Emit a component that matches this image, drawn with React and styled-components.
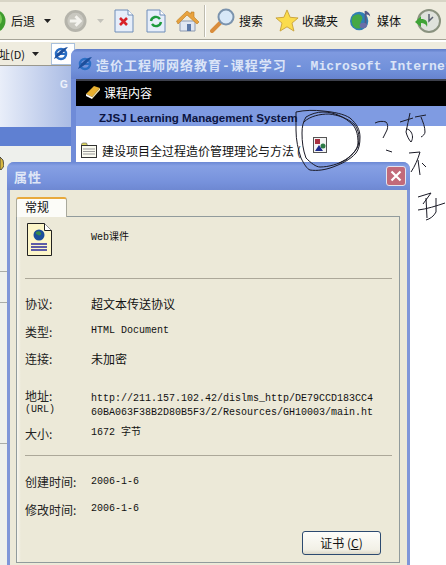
import React from "react";
import styled, { createGlobalStyle } from "styled-components";

const GlobalStyle = createGlobalStyle`
	html, body {
		margin: 0;
		padding: 0;
		background: #fff;
	}
	body {
		width: 446px;
		height: 565px;
		overflow: hidden;
		font-family: "Noto Sans CJK SC", "Liberation Sans", sans-serif;
		font-size: 12px;
		color: #111;
	}
`;

const MONO = `"Liberation Mono", "Noto Sans CJK SC", monospace`;

function BackIcon() {
	return (
		<svg width="24" height="24" viewBox="0 0 24 24">
			<circle cx="12" cy="12" r="11.5" fill="#3f9c2e" />
			<circle cx="12" cy="10" r="8" fill="#7ccb58" />
			<path d="M17 12H7M11 7l-5 5 5 5" fill="none" stroke="#fff" strokeWidth="3" />
		</svg>
	);
}

function ForwardIcon() {
	return (
		<svg width="23" height="24" viewBox="0 0 24 24">
			<circle cx="12" cy="12" r="11.500" fill="#b5b4ab" />
			<circle cx="12" cy="12" r="8.500" fill="#c9c8c0" />
			<path d="M6 12h10M12 7l5 5-5 5" fill="none" stroke="#f4f3ee" strokeWidth="3" />
		</svg>
	);
}

function PageIcon({ children }) {
	return (
		<svg width="20" height="24" viewBox="0 0 20 24">
			<path d="M1 1h13l5 5v17H1z" fill="#e6eefa" stroke="#6f8db8" />
			<path d="M14 1v5h5" fill="#fff" stroke="#6f8db8" />
			{children}
		</svg>
	);
}

function HomeIcon() {
	return (
		<svg width="24" height="24" viewBox="0 0 24 24">
			<path d="M4 12v10h15V12z" fill="#dfe6f2" stroke="#8d9ab0" />
			<path d="M0.5 12L11 2l4 3V3h3v5l5 5-2 2-10-9-9 9z" fill="#e8a23e" stroke="#b97a20" strokeWidth=".6" />
			<rect x="11" y="15" width="4" height="7" fill="#5b78a8" />
		</svg>
	);
}

function SearchIcon() {
	return (
		<svg width="26" height="26" viewBox="0 0 26 26">
			<path d="M11 14L2 23" stroke="#d98d3c" strokeWidth="4" strokeLinecap="round" />
			<circle cx="16" cy="9" r="7.500" fill="#d8e8f8" stroke="#7b93ad" strokeWidth="2" />
		</svg>
	);
}

function StarIcon() {
	return (
		<svg width="24" height="24" viewBox="0 0 26 26">
			<path
				d="M13 1l3.400 8 8.600.7-6.600 5.600 2.100 8.600L13 19.300 5.500 23.900l2.100-8.600L1 9.700 9.600 9z"
				fill="#fbdc4c"
				stroke="#c9a23a"
			/>
		</svg>
	);
}

function MediaIcon() {
	return (
		<svg width="22" height="24" viewBox="0 0 24 26">
			<circle cx="10" cy="13" r="10" fill="#2f7fb5" />
			<path d="M3 8c4-3 8-3 10 0s-3 6-1 10-4 4-7 2-4-9-2-12z" fill="#45a845" />
			<path d="M17 2v15" stroke="#555a88" strokeWidth="2" />
			<path d="M17 2c3 1 5 3 5 6-2-2-3-2-5-2z" fill="#555a88" />
			<ellipse cx="14.500" cy="18" rx="4" ry="3" fill="#6a6ea8" />
		</svg>
	);
}

function HistoryIcon() {
	return (
		<svg width="28" height="26" viewBox="0 0 28 26">
			<circle cx="15" cy="13" r="11" fill="#dfe2dc" stroke="#8a927f" strokeWidth="2" />
			<path d="M15 6v7l4-4" fill="none" stroke="#5a6070" strokeWidth="1.500" />
			<path d="M1 14l6-6v3c5 0 7 2 6 8-1-3-3-4-6-4v4z" fill="#3fa336" />
		</svg>
	);
}

function IeIcon({ size = 16 }) {
	return (
		<svg width={size} height={size} viewBox="0 0 16 16">
			<circle cx="8" cy="8" r="5" fill="none" stroke="#2c6fc4" strokeWidth="2.500" />
			<path d="M3.500 8h9" stroke="#2c6fc4" strokeWidth="2" />
			<path d="M1 13c2-5 8-11 14-12-3 4-9 10-14 12z" fill="#1d4f9c" />
		</svg>
	);
}

function WebDocIcon() {
	return (
		<svg width="25" height="33" viewBox="0 0 25 33">
			<path d="M.5.500h17l7 7v25H.5z" fill="#fdf6c8" stroke="#222" />
			<path d="M17.500.500v7h7" fill="#fff" stroke="#222" />
			<circle cx="12" cy="12" r="5.500" fill="#1c4f9a" />
			<path d="M9 9c2-1 4-1 5 1s-2 3-3 2-3-1-2-3z" fill="#3a8a4a" />
			<path d="M4 21h16M4 24h16M4 27h16" stroke="#2a2a9c" strokeWidth="1.500" />
		</svg>
	);
}

function FolderDocIcon() {
	return (
		<svg width="16" height="16" viewBox="0 0 16 16">
			<path d="M.5 3.500V2l1-1h4l1 2.500z" fill="#e0d860" stroke="#555" strokeWidth=".6" />
			<rect x=".5" y="3.500" width="15" height="12" fill="#fbfbf0" stroke="#333" />
			<path d="M2 7h12M2 9.500h12M2 12h12" stroke="#999" />
		</svg>
	);
}

function BookIcon() {
	return (
		<svg width="16" height="14" viewBox="0 0 16 14">
			<path d="M1 9L9 1l6 2-8 9z" fill="#e8b030" />
			<path d="M1 9l6 3v2L1 11z" fill="#fff" />
			<path d="M7 12l8-9v2l-8 9z" fill="#f5e6b0" />
		</svg>
	);
}

function BrokenImage() {
	return (
		<svg width="14" height="16" viewBox="0 0 14 16">
			<rect x=".5" y=".5" width="13" height="15" fill="#f4f4f4" stroke="#555" />
			<rect x="2" y="2" width="5" height="5" fill="#a83040" />
			<circle cx="10" cy="9" r="2.500" fill="#2d7a45" />
			<path d="M2 14l4-6 4 6z" fill="#1c2a8c" />
		</svg>
	);
}

function TrayIcon() {
	return (
		<svg width="4" height="13" viewBox="0 0 4 13">
			<path d="M0 0l3 3 1 6-3 4H0z" fill="#d8b840" stroke="#333" strokeWidth=".8" />
		</svg>
	);
}

function CloseGlyph() {
	return (
		<svg width="12" height="12" viewBox="0 0 12 12">
			<path d="M1.500 1.500l9 9M10.500 1.500l-9 9" stroke="#fff" strokeWidth="2.200" />
		</svg>
	);
}

function Arrow() {
	return (
		<svg width="7" height="4" viewBox="0 0 7 4">
			<path d="M0 0h7L3.500 4z" fill="#222" />
		</svg>
	);
}

function GreyArrow() {
	return (
		<svg width="7" height="4" viewBox="0 0 7 4">
			<path d="M0 0h7L3.500 4z" fill="#c4c3bb" />
		</svg>
	);
}

// pen marks drawn over the screenshot
function InkMarks() {
	return (
		<Ink width="446" height="565" viewBox="0 0 446 565">
			<g fill="none" stroke="#1a1a26" strokeWidth="1">
				<path d="M296 112c9-2 19-2 27-1 11 1 21 3 27 7 7 6 10 12 10 19 0 7-1 12-4 16-6 7-15 11-23 14-8 3-16 4-23 3-3-1-6-6-9-12-3-9-5-18-5-28 0-6 0-13 0-18z" />
				<path d="M306 117c5-3 11-5 17-5 11 0 22 5 30 13 4 5 5 11 5 18 0 6-6 12-12 17-8 4-17 7-26 7-4 0-9-4-14-9-3-8-4-16-4-25 0-6 1-11 4-16z" />
				<path d="M304 122c6-6 16-8 25-8 9 1 18 4 25 10 5 6 6 14 4 22-3 7-10 13-19 17" />
				<path d="M375 123c4-2 8-2 11-1 2 2 2 5 1 8-1 3-3 5-4 8" />
				<path d="M386 150l6 2" />
				<path d="M400 122l13-4M410 113c-1 6-3 13-4 19 1 4 3 8 5 10 2-3 2-7 0-10-1-2-3-3-5-3" />
				<path d="M415 117l11-2M421 117c2 5 4 10 4 15 0 2-2 4-4 5" />
				<path d="M409 153l11-1M420 152c-2 7-5 14-9 20M418 160l2 15M422 163l4 4" />
				<path d="M418 197l13-4M431 193l-8 11M418 210c9-1 18-4 27-7M426 198l1 20M436 198v14c-2 4-6 7-10 8" />
			</g>
		</Ink>
	);
}

export default function App() {
	return (
		<Page>
			<GlobalStyle />
			<Toolbar>
				<BackSlot>
					<BackIcon />
				</BackSlot>
				<ToolLabel $gap={5}>后退</ToolLabel>
				<ArrowSlot $width={24}>
					<Arrow />
				</ArrowSlot>
				<ToolIcon $gap={5}>
					<ForwardIcon />
				</ToolIcon>
				<ArrowSlot $width={26}>
					<GreyArrow />
				</ArrowSlot>
				<ToolIcon $gap={1}>
					<PageIcon>
						<path d="M6 9l7 7M13 9l-7 7" stroke="#d8232a" strokeWidth="2.600" />
					</PageIcon>
				</ToolIcon>
				<ToolIcon $gap={12}>
					<PageIcon>
						<path d="M5 12a5 5 0 0 1 9-2M15 13a5 5 0 0 1-9 2" fill="none" stroke="#1c9a3c" strokeWidth="2.400" />
					</PageIcon>
				</ToolIcon>
				<ToolIcon $gap={10}>
					<HomeIcon />
				</ToolIcon>
				<ToolSeparator />
				<SearchIcon />
				<ToolLabel $gap={3}>搜索</ToolLabel>
				<ToolIcon $gap={12}>
					<StarIcon />
				</ToolIcon>
				<ToolLabel $gap={3}>收藏夹</ToolLabel>
				<ToolIcon $gap={12}>
					<MediaIcon />
				</ToolIcon>
				<ToolLabel $gap={5}>媒体</ToolLabel>
				<ToolIcon $gap={13}>
					<HistoryIcon />
				</ToolIcon>
			</Toolbar>
			<AddressRow>
				<AddressLabel>址(D)</AddressLabel>
				<ArrowSlot $width={20}>
					<Arrow />
				</ArrowSlot>
				<AddressField>
					<IeIcon />
				</AddressField>
			</AddressRow>
			<SidePanel>
				<SideFaint>G</SideFaint>
				<SideBand />
				<SideTray>
					<TrayIcon />
				</SideTray>
				<SideRule $top={271} />
				<SideRule $top={302} />
				<SideRule $top={443} />
			</SidePanel>

			<BrowserWindow>
				<BrowserTitle>
					<IeIcon />
					<BrowserTitleText>
						造价工程师网络教育-课程学习
						<BrowserTitleLatin> - Microsoft Internet</BrowserTitleLatin>
					</BrowserTitleText>
				</BrowserTitle>
				<BrowserBody>
					<BlackBar>
						<BookIcon />
						课程内容
					</BlackBar>
					<SystemBar>ZJSJ Learning Management System</SystemBar>
					<CourseRow>
						<FolderDocIcon />
						建设项目全过程造价管理理论与方法 (
						<BrokenSlot>
							<BrokenImage />
						</BrokenSlot>
					</CourseRow>
				</BrowserBody>
			</BrowserWindow>

			<Dialog>
				<DialogTitle>
					<DialogTitleText>属性</DialogTitleText>
					<CloseButton>
						<CloseGlyph />
					</CloseButton>
				</DialogTitle>
				<DialogBody>
					<Tab>常规</Tab>
					<Pane>
						<HeadRow>
							<HeadIcon>
								<WebDocIcon />
							</HeadIcon>
							<HeadValue>Web课件</HeadValue>
						</HeadRow>
						<Rule />
						<Row $height={28} $top={10}>
							<Label>协议:</Label>
							<Value>超文本传送协议</Value>
						</Row>
						<Row $height={28}>
							<Label>类型:</Label>
							<MonoValue>HTML Document</MonoValue>
						</Row>
						<Row $height={26}>
							<Label>连接:</Label>
							<Value>未加密</Value>
						</Row>
						<AddressBlock>
							<Label>
								<div>地址:</div>
								<UrlTag>(URL)</UrlTag>
							</Label>
							<UrlValue>
								http://211.157.102.42/dislms_http/DE79CCD183CC4
								<br />
								60BA063F38B2D80B5F3/2/Resources/GH10003/main.ht
							</UrlValue>
						</AddressBlock>
						<Row $height={24}>
							<Label>大小:</Label>
							<MonoValue>1672 字节</MonoValue>
						</Row>
						<Rule $top={10} />
						<Row $height={27} $top={12}>
							<Label>创建时间:</Label>
							<MonoValue>2006-1-6</MonoValue>
						</Row>
						<Row $height={28}>
							<Label>修改时间:</Label>
							<MonoValue>2006-1-6</MonoValue>
						</Row>
						<ButtonRow>
							<CertButton>
								证书 (<u>C</u>)
							</CertButton>
						</ButtonRow>
					</Pane>
				</DialogBody>
			</Dialog>
			<InkMarks />
		</Page>
	);
}

const Page = styled.div`
	position: relative;
	width: 446px;
	height: 565px;
	overflow: hidden;
	background: #fff;
`;

const Toolbar = styled.div`
	display: flex;
	align-items: center;
	height: 40px;
	box-sizing: border-box;
	border-top: 2px solid #d8d5c6;
	background: #efecdf;
	border-bottom: 1px solid #a6a498;
`;

const BackSlot = styled.div`
	display: flex;
	flex: none;
	margin-left: -18px;
`;

const ToolLabel = styled.span`
	margin-left: ${(p) => p.$gap ?? 3}px;
	font-size: 12px;
	white-space: nowrap;
`;

const ArrowSlot = styled.div`
	display: flex;
	align-items: center;
	justify-content: center;
	flex: none;
	width: ${(p) => p.$width}px;
`;

const ToolIcon = styled.div`
	display: flex;
	flex: none;
	margin-left: ${(p) => p.$gap}px;
`;

const ToolSeparator = styled.div`
	flex: none;
	width: 1px;
	height: 32px;
	margin: 0 5px 0 4px;
	background: #bdbbae;
	box-shadow: 1px 0 0 #fff;
`;

const AddressRow = styled.div`
	display: flex;
	align-items: center;
	height: 26px;
	box-sizing: border-box;
	border-top: 2px solid #fff;
	background: #efecdf;
	border-bottom: 1px solid #9a988d;
`;

const AddressLabel = styled.span`
	margin-left: -1px;
	font-size: 11px;
	white-space: nowrap;
	width: 26px;
`;

const AddressField = styled.div`
	display: flex;
	align-items: center;
	box-sizing: border-box;
	height: 22px;
	width: 24px;
	margin-left: 6px;
	padding-left: 1px;
	background: #fff;
	border: 1px solid #a9c0dc;
`;

const SidePanel = styled.div`
	position: relative;
	width: 72px;
	height: 499px;
	background: #eef0ec;
`;

const SideFaint = styled.div`
	position: absolute;
	top: 0;
	left: 0;
	width: 100%;
	height: 61px;
	padding: 13px 0 0 60px;
	box-sizing: border-box;
	font: bold 10px "Liberation Sans", sans-serif;
	color: #eef2fb;
	background: linear-gradient(90deg, #e9eef9, #a9bbe4);
`;

const SideBand = styled.div`
	position: absolute;
	top: 61px;
	left: 0;
	width: 100%;
	height: 19px;
	background: #5f80d2;
`;

const SideTray = styled.div`
	position: absolute;
	top: 91px;
	left: 0;
	display: flex;
`;

const SideRule = styled.div`
	position: absolute;
	top: ${(p) => p.$top - 66}px;
	left: 0;
	width: 100%;
	height: 1px;
	background: #a9aca8;
`;

const BrowserWindow = styled.div`
	position: absolute;
	top: 49px;
	left: 71px;
	width: 420px;
	height: 130px;
	display: flex;
	flex-direction: column;
	border-radius: 7px 0 0 0;
	background: #6f8bd8;
`;

const BrowserTitle = styled.div`
	display: flex;
	align-items: center;
	gap: 3px;
	height: 30px;
	flex: none;
	padding-left: 6px;
	box-sizing: border-box;
	border-radius: 7px 0 0 0;
	background: linear-gradient(#5f7cc8 0, #7f9ae0 12%, #7090da 70%, #6783cf 100%);
`;

const BrowserTitleText = styled.span`
	font: bold 13px ${MONO};
	color: #dbe4f7;
	letter-spacing: 1px;
	white-space: pre;
`;

const BrowserTitleLatin = styled.span`
	letter-spacing: 0.1px;
`;

const BrowserBody = styled.div`
	flex: 1;
	margin-left: 5px;
	background: #fff;
	border-top: 2px solid #3c3f4a;
`;

const BlackBar = styled.div`
	display: flex;
	align-items: center;
	gap: 3px;
	height: 25px;
	padding: 0 0 3px 9px;
	box-sizing: border-box;
	background: #000;
	color: #fff;
	font-size: 12px;
`;

const SystemBar = styled.div`
	height: 20px;
	padding-left: 23px;
	box-sizing: border-box;
	overflow: hidden;
	background: #7f9be2;
	color: #0c1440;
	font: bold 11.6px/24px "Liberation Sans", sans-serif;
	white-space: nowrap;
`;

const CourseRow = styled.div`
	display: flex;
	align-items: center;
	gap: 5px;
	height: 26px;
	margin-top: 11px;
	padding-left: 5px;
	font-size: 12px;
	white-space: pre;
`;

const BrokenSlot = styled.div`
	display: flex;
	margin: -10px 0 0 7px;
`;

const Ink = styled.svg`
	position: absolute;
	top: 0;
	left: 0;
	pointer-events: none;
`;

const Dialog = styled.div`
	position: absolute;
	top: 162px;
	left: 7px;
	width: 403px;
	height: 420px;
	display: flex;
	flex-direction: column;
	border-radius: 7px 7px 0 0;
	background: #7f96d8;
`;

const DialogTitle = styled.div`
	display: flex;
	align-items: center;
	justify-content: space-between;
	height: 28px;
	flex: none;
	padding: 0 4px 0 7px;
	box-sizing: border-box;
	border-radius: 7px 7px 0 0;
	background: linear-gradient(#6b88d4 0, #86a0e4 14%, #7792dc 70%, #6e88d2 100%);
`;

const DialogTitleText = styled.span`
	font-size: 13px;
	font-weight: 700;
	color: #dfe6f6;
	letter-spacing: 1px;
`;

const CloseButton = styled.div`
	display: flex;
	align-items: center;
	justify-content: center;
	width: 20px;
	height: 20px;
	box-sizing: border-box;
	border: 1px solid #e4e4ee;
	border-radius: 3px;
	background: #c26a7a;
`;

const DialogBody = styled.div`
	flex: 1;
	margin: 0 3px;
	padding: 7px 6px 0;
	background: #ece9d8;
`;

const Tab = styled.div`
	width: 51px;
	height: 20px;
	box-sizing: border-box;
	padding-left: 8px;
	background: #fcfcf8;
	border: 1px solid #a9a99c;
	border-top: 2px solid #e8a93c;
	border-bottom: none;
	border-radius: 3px 3px 0 0;
	font-size: 12px;
	line-height: 15px;
	position: relative;
	z-index: 1;
	margin-bottom: -1px;
`;

const Pane = styled.div`
	width: 384px;
	height: 347px;
	box-sizing: border-box;
	padding: 0 7px 0 8px;
	border: 1px solid #919b9c;
	background: linear-gradient(90deg, #f7f6ef 0, #ece9d8 4px);
`;

const HeadRow = styled.div`
	display: flex;
	height: 61px;
`;

const HeadIcon = styled.div`
	width: 66px;
	padding: 6px 0 0 2px;
	box-sizing: border-box;
`;

const Rule = styled.div`
	height: 1px;
	background: #aca899;
	margin-top: ${(p) => p.$top ?? 0}px;
`;

const Row = styled.div`
	display: flex;
	align-items: center;
	height: ${(p) => p.$height}px;
	margin-top: ${(p) => p.$top ?? 0}px;
	white-space: nowrap;
`;

const Label = styled.div`
	width: 66px;
	flex: none;
	font-size: 12px;
	line-height: 15px;
	color: #222;
`;

const UrlTag = styled.div`
	font: 10px/14px ${MONO};
`;

const Value = styled.div`
	font-size: 12px;
	color: #111;
`;

const MonoValue = styled.div`
	font: 10px/14px ${MONO};
	color: #111;
`;

const HeadValue = styled(MonoValue)`
	padding-top: 14px;
`;

const AddressBlock = styled.div`
	display: flex;
	margin-top: 17px;
	height: 33px;
`;

const UrlValue = styled.div`
	font: 10px/14px ${MONO};
	color: #111;
	white-space: nowrap;
	padding-top: 4px;
`;

const ButtonRow = styled.div`
	display: flex;
	justify-content: flex-end;
	margin-top: 8px;
	padding-right: 11px;
`;

const CertButton = styled.div`
	width: 79px;
	height: 24px;
	box-sizing: border-box;
	border: 1px solid #2c4a70;
	border-radius: 3px;
	background: linear-gradient(#fdfdfa, #f2f0e6 80%, #dcd8c8);
	font-size: 12px;
	line-height: 21px;
	text-align: center;
`;
